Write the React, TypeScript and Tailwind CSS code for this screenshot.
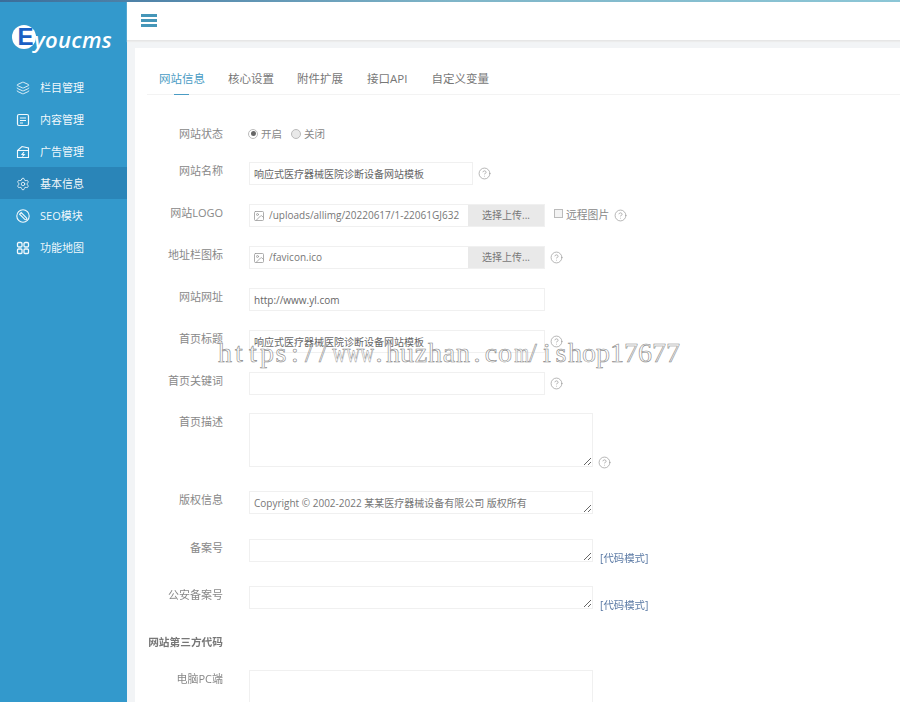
import { Layers, Settings, CircleHelp, Image } from 'lucide-react'
import type { ReactNode } from 'react'

const font = "font-['Open_Sans','Noto_Sans_CJK_SC',sans-serif]"
const watermark = 'https://www.huzhan.com/ishop17677'

function SeoIcon() {
  return (
    <svg viewBox="0 0 14 14" className="h-[14px] w-[14px]" fill="none" stroke="currentColor" strokeWidth="1.1">
      <circle cx="7" cy="7" r="6.2" />
      <path d="M3.600 5.200 5.200 3.600 10.400 8.800A1.100 1.100 0 0 1 8.800 10.400Z" />
    </svg>
  )
}

function ArticleIcon() {
  return (
    <svg viewBox="0 0 14 14" className="h-[14px] w-[14px]" fill="none" stroke="currentColor" strokeWidth="1.2">
      <rect x="1.500" y="1.500" width="11" height="11" rx="1.500" />
      <path d="M4 5h6M4 7.500h6M4 10h3" />
    </svg>
  )
}

function AdIcon() {
  return (
    <svg viewBox="0 0 14 14" className="h-[14px] w-[14px]" fill="none" stroke="currentColor" strokeWidth="1.1">
      <path d="M1.500 12.500V5.500L6 1.500l6.500 1.500v9.500z" />
      <path d="M1.500 5.500h11M8 7 6 9.500h2.200L6.400 11.500" />
    </svg>
  )
}

function GridIcon() {
  return (
    <svg viewBox="0 0 14 14" className="h-[14px] w-[14px]" fill="none" stroke="currentColor" strokeWidth="1.3">
      <rect x="1.500" y="1.500" width="4.500" height="4.500" rx="1.200" />
      <rect x="8" y="1.500" width="4.500" height="4.500" rx="1.200" />
      <rect x="1.500" y="8" width="4.500" height="4.500" rx="1" />
      <rect x="8" y="8" width="4.500" height="4.500" rx="1" />
    </svg>
  )
}

function NavItem({ icon, label, active }: { icon: ReactNode; label: string; active?: boolean }) {
  return (
    <div className={`flex h-8 items-center gap-[10px] pt-[2px] pl-[16px] text-[11px] text-white/95 ${active ? 'bg-[#2a85b8]' : ''}`}>
      <span className="flex w-[14px] justify-center">{icon}</span>
      <span>{label}</span>
    </div>
  )
}

function Help({ className = '' }: { className?: string }) {
  return <CircleHelp className={`h-[13px] w-[13px] shrink-0 text-[#999] ${className}`} strokeWidth={1.3} />
}

function Row({ label, children, className = '' }: { label: string; children: ReactNode; className?: string }) {
  return (
    <div className={`flex ${className}`}>
      <label className="w-[76px] shrink-0 pt-[1px] text-right text-[11px] leading-[16px] text-[#888]">{label}</label>
      <div className="ml-[26px] flex items-center">{children}</div>
    </div>
  )
}

function TextInput({ value = '', width }: { value?: string; width: string }) {
  return (
    <input
      readOnly
      value={value}
      className={`h-[23px] border border-[#f0f0f0] bg-white px-[4px] text-[10px] text-[#666] outline-none ${width}`}
    />
  )
}

function UploadInput({ value }: { value: string }) {
  return (
    <div className="flex h-[23px] w-[296px] items-center border border-[#f0f0f0] bg-white">
      <Image className="ml-[3px] h-[12px] w-[12px] shrink-0 text-[#999]" strokeWidth={1.6} />
      <span className="ml-[4px] w-[199px] shrink-0 overflow-hidden text-[10px] whitespace-nowrap text-[#777]">{value}</span>
      <span className="flex h-full flex-1 items-center justify-center bg-[#e9e9e9] text-[10px] text-[#777]">选择上传...</span>
    </div>
  )
}

function Area({ value = '', height }: { value?: string; height: string }) {
  return (
    <textarea
      readOnly
      value={value}
      className={`block w-[344px] border border-[#f0f0f0] bg-white px-[4px] py-[3px] text-[10px] leading-[16px] text-[#777] outline-none ${height}`}
    />
  )
}

function CodeLink() {
  return <a className="mt-auto -mb-[3px] ml-[7px] text-[10.400px] leading-[14px] text-[#5b7aa5]">[代码模式]</a>
}

export default function App() {
  const tabs = ['网站信息', '核心设置', '附件扩展', '接口API', '自定义变量']
  return (
    <div className={`relative flex h-[702px] w-[900px] overflow-hidden bg-[#f2f4f6] ${font}`}>
      <aside className="w-[127px] shrink-0 bg-[#3399cc]">
        <div className="flex h-[71px] items-center pt-[3px] pl-[12px]">
          <span className="flex h-[24px] w-[24px] items-center justify-center rounded-full bg-white pl-[3px] font-['Liberation_Sans',sans-serif] text-[24px] leading-none font-bold text-[#1a5fc4]">
            E
          </span>
          <span className="-ml-[2px] pt-[4px] font-['Open_Sans',sans-serif] text-[22px] leading-none font-semibold tracking-[0.3px] text-white italic">
            youcms
          </span>
        </div>
        <NavItem icon={<Layers className="h-[14px] w-[14px]" strokeWidth={1.5} />} label="栏目管理" />
        <NavItem icon={<ArticleIcon />} label="内容管理" />
        <NavItem icon={<AdIcon />} label="广告管理" />
        <NavItem icon={<Settings className="h-[14px] w-[14px]" strokeWidth={1.4} />} label="基本信息" active />
        <NavItem icon={<SeoIcon />} label="SEO模块" />
        <NavItem icon={<GridIcon />} label="功能地图" />
      </aside>

      <div className="flex min-w-0 flex-1 flex-col">
        <header className="flex h-[41px] shrink-0 items-center border-b border-[#e6e6e6] bg-white pl-[14px] shadow-[0_1px_1px_#ececec]">
          <svg viewBox="0 0 16 13" className="h-[13px] w-[16px] fill-[#4596b8]">
            <rect width="16" height="3" />
            <rect y="5" width="16" height="3" />
            <rect y="10" width="16" height="3" />
          </svg>
        </header>

        <main className="mt-[7px] ml-[8px] flex-1 bg-white pl-[12px]">
          <nav className="flex h-[47px] gap-[23px] border-b border-[#f3f3f3] pt-[22px] pl-[12px] text-[11.500px] leading-[17px] text-[#777]">
            {tabs.map((t, i) => (
              <span key={t} className={`relative ${i === 0 ? 'text-[#4a9cc4]' : ''} ${i === 3 ? 'mr-px ml-px' : ''}`}>
                {t}
                {i === 0 && <span className="absolute top-[24px] left-[15px] h-[1px] w-[15px] bg-[#4a9cc4]" />}
              </span>
            ))}
          </nav>

          <form>
            <Row label="网站状态" className="mt-[30px]">
              <div className="-ml-px flex items-center text-[10.500px] leading-[16px] text-[#888]">
                <span className="flex h-[10px] w-[10px] items-center justify-center rounded-full border border-[#bbb] bg-white">
                  <span className="h-[5px] w-[5px] rounded-full bg-[#666]" />
                </span>
                <span className="ml-[3px]">开启</span>
                <span className="ml-[9px] h-[10px] w-[10px] rounded-full border border-[#bbb] bg-[#e9e9e9]" />
                <span className="ml-[3px]">关闭</span>
              </div>
            </Row>
            <Row label="网站名称" className="mt-[20px]">
              <TextInput width="w-[224px]" value="响应式医疗器械医院诊断设备网站模板" />
              <Help className="ml-[5px]" />
            </Row>
            <Row label="网站LOGO" className="mt-[19px]">
              <UploadInput value="/uploads/allimg/20220617/1-22061GJ632" />
              <span className="mt-[5px] ml-[9px] h-[9px] w-[9px] self-start border border-[#bbb] bg-[#f3f3f3]" />
              <span className="ml-[3px] text-[10.800px] text-[#888]">远程图片</span>
              <Help className="ml-[5px]" />
            </Row>
            <Row label="地址栏图标" className="mt-[19px]">
              <UploadInput value="/favicon.ico" />
              <Help className="ml-[5px]" />
            </Row>
            <Row label="网站网址" className="mt-[19px]">
              <TextInput width="w-[296px]" value="http://www.yl.com" />
            </Row>
            <Row label="首页标题" className="mt-[19px]">
              <TextInput width="w-[296px]" value="响应式医疗器械医院诊断设备网站模板" />
              <Help className="ml-[5px]" />
            </Row>
            <Row label="首页关键词" className="mt-[19px]">
              <TextInput width="w-[296px]" />
              <Help className="ml-[5px]" />
            </Row>
            <Row label="首页描述" className="mt-[18px]">
              <Area height="h-[54px]" />
              <Help className="mt-auto -mb-[2px] ml-[5px]" />
            </Row>
            <Row label="版权信息" className="mt-[24px]">
              <Area height="h-[23px]" value="Copyright © 2002-2022 某某医疗器械设备有限公司 版权所有" />
            </Row>
            <Row label="备案号" className="mt-[25px]">
              <Area height="h-[23px]" />
              <CodeLink />
            </Row>
            <Row label="公安备案号" className="mt-[24px]">
              <Area height="h-[23px]" />
              <CodeLink />
            </Row>
            <div className="mt-[25px] w-[76px] text-right text-[10.700px] leading-[16px] font-bold whitespace-nowrap text-[#777]">网站第三方代码</div>
            <Row label="电脑PC端" className="mt-[20px]">
              <Area height="h-[80px]" />
            </Row>
          </form>
        </main>
      </div>

      {/* top strip of the browser capture */}
      <div className="absolute top-0 left-0 h-[2px] w-full bg-gradient-to-r from-[#3b6d9a] via-[#7fb5c8] to-[#8cc6d6]" />

      {/* site watermark, every glyph in a fixed 14px cell */}
      <div className="absolute top-[337px] left-[218px] flex font-['Liberation_Serif',serif] text-[28px] leading-[32px] text-white/70 [-webkit-text-stroke:0.6px_#888]">
        {watermark.split('').map((c, i) => (
          <span key={i} className={`w-[14px] text-center ${c === 'w' || c === 'm' ? 'scale-x-[0.68]' : ''}`}>
            {c}
          </span>
        ))}
      </div>
    </div>
  )
}
